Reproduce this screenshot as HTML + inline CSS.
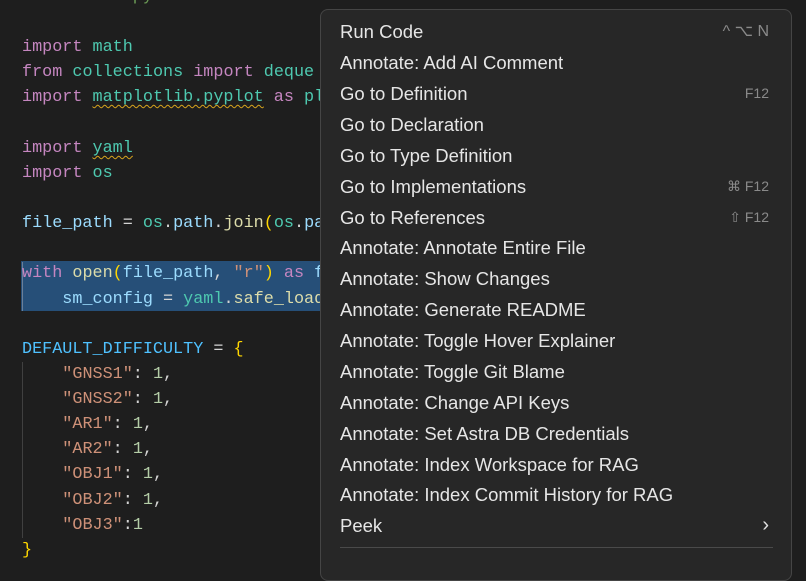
<!DOCTYPE html>
<html><head><meta charset="utf-8"><style>
html,body{margin:0;padding:0;}
body{width:806px;height:563px;background:#1e1e1e;overflow:hidden;position:relative;}
.code{position:absolute;left:22px;top:0;font-family:"Liberation Mono",monospace;font-size:16.8px;color:#d4d4d4;white-space:pre;}
.l{position:absolute;left:0;height:25px;line-height:25px;}
.k{color:#c586c0}.m{color:#4ec9b0}.v{color:#9cdcfe}.f{color:#dcdcaa}.s{color:#ce9178}.n{color:#b5cea8}.c{color:#4fc1ff}.b{color:#ffd700}.g{color:#6a9955}
.sq{text-decoration:underline wavy #d7a41d;text-underline-offset:3px;text-decoration-thickness:1px}
.sel{position:absolute;left:21px;top:261px;width:300px;height:50px;background:#264f78;}
.guide{position:absolute;left:22px;width:1px;background:#404040;}
.menu{position:absolute;left:320px;top:9px;width:470px;height:570px;background:#272727;border:1px solid #454545;border-radius:8px;}
.it{position:absolute;left:19px;right:18px;height:31px;line-height:31px;font-family:"Liberation Sans",sans-serif;font-size:18.5px;color:#e6e6e6;}
.sc{position:absolute;right:4px;top:0;font-size:14px;color:#8a8a8a;}
</style></head><body>
<div class="sel"></div>
<div class="guide" style="top:262px;height:49px;background:#6a7f99"></div>
<div class="guide" style="top:362px;height:176px"></div>
<div class="code">
<div class="l g" style="top:-16px">#!/usr/bin/python3</div>
<div class="l" style="top:35px"><span class="k">import</span> <span class="m">math</span></div>
<div class="l" style="top:60px"><span class="k">from</span> <span class="m">collections</span> <span class="k">import</span> <span class="m">deque</span></div>
<div class="l" style="top:85px"><span class="k">import</span> <span class="m sq">matplotlib.pyplot</span> <span class="k">as</span> <span class="m">plt</span></div>
<div class="l" style="top:136px"><span class="k">import</span> <span class="m sq">yaml</span></div>
<div class="l" style="top:161px"><span class="k">import</span> <span class="m">os</span></div>
<div class="l" style="top:211px"><span class="v">file_path</span> = <span class="m">os</span>.<span class="v">path</span>.<span class="f">join</span><span class="b">(</span><span class="m">os</span>.<span class="v">path</span></div>
<div class="l" style="top:261px"><span class="k">with</span> <span class="f">open</span><span class="b">(</span><span class="v">file_path</span>, <span class="s">"r"</span><span class="b">)</span> <span class="k">as</span> <span class="v">f</span></div>
<div class="l" style="top:287px">    <span class="v">sm_config</span> = <span class="m">yaml</span>.<span class="f">safe_load</span></div>
<div class="l" style="top:337px"><span class="c">DEFAULT_DIFFICULTY</span> = <span class="b">{</span></div>
<div class="l" style="top:362px">    <span class="s">"GNSS1"</span>: <span class="n">1</span>,</div>
<div class="l" style="top:387px">    <span class="s">"GNSS2"</span>: <span class="n">1</span>,</div>
<div class="l" style="top:412px">    <span class="s">"AR1"</span>: <span class="n">1</span>,</div>
<div class="l" style="top:437px">    <span class="s">"AR2"</span>: <span class="n">1</span>,</div>
<div class="l" style="top:462px">    <span class="s">"OBJ1"</span>: <span class="n">1</span>,</div>
<div class="l" style="top:488px">    <span class="s">"OBJ2"</span>: <span class="n">1</span>,</div>
<div class="l" style="top:513px">    <span class="s">"OBJ3"</span>:<span class="n">1</span></div>
<div class="l" style="top:538px"><span class="b">}</span></div>
</div>
<div class="menu">
<div class="it" style="top:6px">Run Code<span class="sc" style="font-size:16px">^ ⌥ N</span></div>
<div class="it" style="top:37px">Annotate: Add AI Comment</div>
<div class="it" style="top:68px">Go to Definition<span class="sc">F12</span></div>
<div class="it" style="top:99px">Go to Declaration</div>
<div class="it" style="top:130px">Go to Type Definition</div>
<div class="it" style="top:161px">Go to Implementations<span class="sc">⌘ F12</span></div>
<div class="it" style="top:192px">Go to References<span class="sc">⇧ F12</span></div>
<div class="it" style="top:222px">Annotate: Annotate Entire File</div>
<div class="it" style="top:253px">Annotate: Show Changes</div>
<div class="it" style="top:284px">Annotate: Generate README</div>
<div class="it" style="top:315px">Annotate: Toggle Hover Explainer</div>
<div class="it" style="top:346px">Annotate: Toggle Git Blame</div>
<div class="it" style="top:377px">Annotate: Change API Keys</div>
<div class="it" style="top:408px">Annotate: Set Astra DB Credentials</div>
<div class="it" style="top:439px">Annotate: Index Workspace for RAG</div>
<div class="it" style="top:469px">Annotate: Index Commit History for RAG</div>
<div class="it" style="top:500px">Peek<span class="sc" style="color:#e0e0e0;font-size:20px">›</span></div>
<div style="position:absolute;left:19px;right:18px;top:537px;height:1px;background:#4a4a4a"></div>
</div>
</body></html>
